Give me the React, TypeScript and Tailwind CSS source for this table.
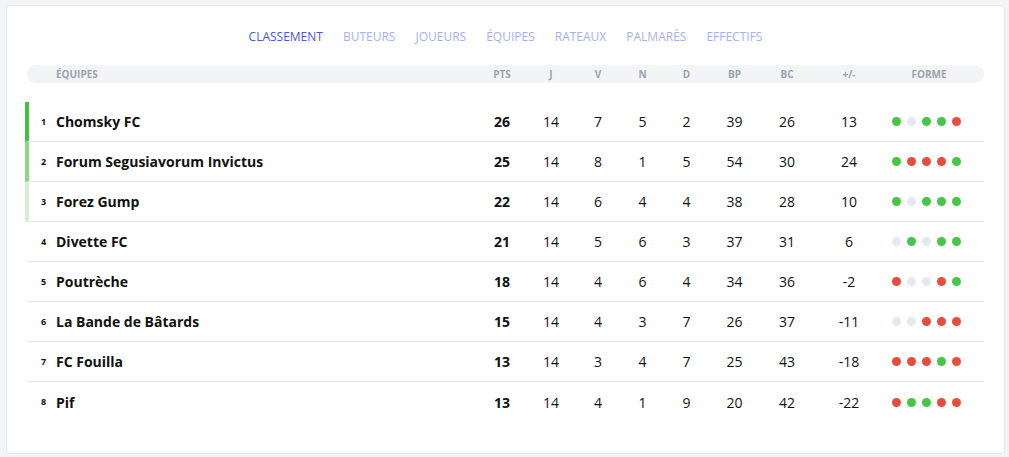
import React from "react";

type Team = {
  rank: number;
  name: string;
  pts: number;
  j: number;
  v: number;
  n: number;
  d: number;
  bp: number;
  bc: number;
  diff: number;
  form: string;
};

const teams: Team[] = [
  { rank: 1, name: "Chomsky FC", pts: 26, j: 14, v: 7, n: 5, d: 2, bp: 39, bc: 26, diff: 13, form: "WDWWL" },
  { rank: 2, name: "Forum Segusiavorum Invictus", pts: 25, j: 14, v: 8, n: 1, d: 5, bp: 54, bc: 30, diff: 24, form: "WLLLW" },
  { rank: 3, name: "Forez Gump", pts: 22, j: 14, v: 6, n: 4, d: 4, bp: 38, bc: 28, diff: 10, form: "WDWWW" },
  { rank: 4, name: "Divette FC", pts: 21, j: 14, v: 5, n: 6, d: 3, bp: 37, bc: 31, diff: 6, form: "DWDWW" },
  { rank: 5, name: "Poutrèche", pts: 18, j: 14, v: 4, n: 6, d: 4, bp: 34, bc: 36, diff: -2, form: "LDDLW" },
  { rank: 6, name: "La Bande de Bâtards", pts: 15, j: 14, v: 4, n: 3, d: 7, bp: 26, bc: 37, diff: -11, form: "DDLLL" },
  { rank: 7, name: "FC Fouilla", pts: 13, j: 14, v: 3, n: 4, d: 7, bp: 25, bc: 43, diff: -18, form: "LLLWL" },
  { rank: 8, name: "Pif", pts: 13, j: 14, v: 4, n: 1, d: 9, bp: 20, bc: 42, diff: -22, form: "LWWLL" },
];

const tabs = ["CLASSEMENT", "BUTEURS", "JOUEURS", "ÉQUIPES", "RATEAUX", "PALMARÈS", "EFFECTIFS"];

const grid =
  "grid grid-cols-[15px_1fr_50px_48px_46px_43px_45px_51px_54px_70px_100px] items-center";

function Dot({ r }: { r: string }) {
  const cls =
    r === "W" ? "bg-[#46c646]" : r === "L" ? "bg-[#e74c3c]" : "bg-[#e5e9ee]";
  return <span className={`block w-[9px] h-[9px] rounded-full ${cls}`} />;
}

export default function App() {
  return (
    <div
      className="min-h-screen bg-[#f3f4f6] pt-[5px] pl-[6px] pr-[4px] pb-[3px]"
      style={{ fontFamily: '"Open Sans", "Liberation Sans", sans-serif' }}
    >
      <div className="bg-white border border-[#e6e8ec] rounded-[4px] pt-[23px] pb-[31px] px-5">
        <div className="flex justify-center gap-5 text-[12px] leading-4">
          {tabs.map((t, i) => (
            <span key={t} className={i === 0 ? "text-[#4a57d2]" : "text-[#a8b0ec]"}>
              {t}
            </span>
          ))}
        </div>

        <div
          className={`${grid} mt-[20px] h-[18px] rounded-full bg-[#f3f4f6] pl-[14px] text-[10px] font-bold text-[#9ca3af] leading-none`}
        >
          <span />
          <span>ÉQUIPES</span>
          <span className="text-center">PTS</span>
          <span className="text-center">J</span>
          <span className="text-center">V</span>
          <span className="text-center">N</span>
          <span className="text-center">D</span>
          <span className="text-center">BP</span>
          <span className="text-center">BC</span>
          <span className="text-center">+/-</span>
          <span className="text-center pr-[10px]">FORME</span>
        </div>

        <div className="mt-[19px]">
          {teams.map((t, i) => {
            const bar =
              t.rank === 1
                ? "-ml-[2px] border-l-4 border-l-[#44c13f] pl-[12px]"
                : t.rank === 2
                ? "-ml-[2px] border-l-4 border-l-[#8bd88a] pl-[12px]"
                : t.rank === 3
                ? "-ml-[2px] border-l-4 border-l-[#d3f0d1] pl-[12px]"
                : "pl-[14px]";
            const sep = i < teams.length - 1 ? "border-b border-b-[#e8e9ec]" : "";
            return (
              <div key={t.rank} className={`${grid} h-10 ${bar} ${sep} text-[14px] text-[#111]`}>
                <span className="text-[9px] font-bold">{t.rank}</span>
                <span className="font-bold">{t.name}</span>
                <span className="text-center font-bold">{t.pts}</span>
                <span className="text-center">{t.j}</span>
                <span className="text-center">{t.v}</span>
                <span className="text-center">{t.n}</span>
                <span className="text-center">{t.d}</span>
                <span className="text-center">{t.bp}</span>
                <span className="text-center">{t.bc}</span>
                <span className="text-center">{t.diff}</span>
                <span className="flex justify-center gap-[6px] pr-[16px]">
                  {t.form.split("").map((r, k) => (
                    <Dot key={k} r={r} />
                  ))}
                </span>
              </div>
            );
          })}
        </div>
      </div>
    </div>
  );
}
